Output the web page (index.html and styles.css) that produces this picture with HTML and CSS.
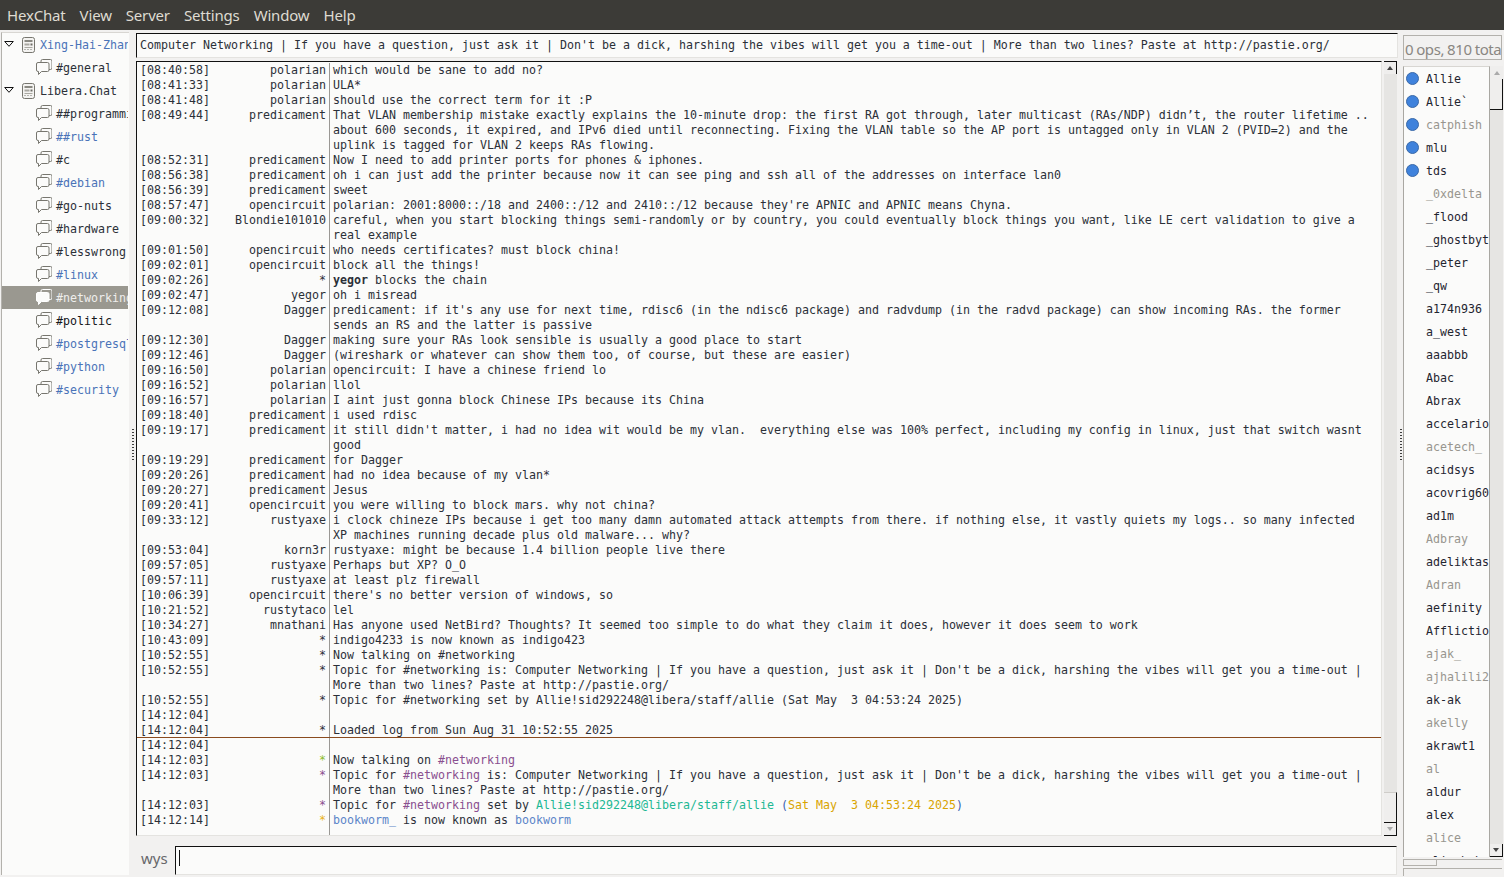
FILE: index.html
```html
<!DOCTYPE html>
<html lang="en">
<head>
<meta charset="utf-8">
<title>HexChat</title>
<link rel="stylesheet" href="styles.css">
</head>
<body>
<svg class="defs" width="0" height="0">
  <symbol id="srv" viewBox="0 0 15 16">
    <rect x="1.5" y="0.5" width="12" height="15" rx="2" fill="#f4f3f1" stroke="#77766f"/>
    <rect x="3.5" y="3" width="8" height="2" fill="#8a8982"/>
    <rect x="3.5" y="6.5" width="5" height="2" fill="#a9a8a1"/>
    <rect x="9.5" y="6.5" width="2" height="2" fill="#6d6c66"/>
    <rect x="3.5" y="10" width="8" height="1" fill="#a9a8a1"/>
    <rect x="3.5" y="12" width="1" height="1" fill="#77766f"/>
    <rect x="6.500" y="12" width="1" height="1" fill="#77766f"/>
    <rect x="9.500" y="12" width="1" height="1" fill="#77766f"/>
  </symbol>
  <symbol id="chat" viewBox="0 0 16 16">
    <path d="M5 3V2a1.500 1.500 0 0 1 1.500-1.500h8A1.500 1.500 0 0 1 16 2v7a1.500 1.500 0 0 1-1.500 1.500H13" fill="none" stroke="currentColor"/>
    <path d="M2 3.500h9.500A1.500 1.500 0 0 1 13 5v6a1.500 1.500 0 0 1-1.500 1.500H5.500L2.500 15.500v-3H2A1.500 1.500 0 0 1 .5 11V5A1.500 1.500 0 0 1 2 3.500z" fill="#fbfbfa" stroke="currentColor"/>
  </symbol>
  <symbol id="exp" viewBox="0 0 10 6">
    <path d="M.7.5h8.600L5 5.300z" fill="#fbfbfa" stroke="#111" stroke-width="1"/>
  </symbol>
</svg>

<nav class="menubar">
  <span class="menu">HexChat</span>
  <span class="menu">View</span>
  <span class="menu">Server</span>
  <span class="menu">Settings</span>
  <span class="menu">Window</span>
  <span class="menu">Help</span>
</nav>

<div class="app">
  <aside class="tree">
    <div class="node net"><svg class="exp"><use href="#exp"/></svg><svg class="srv"><use href="#srv"/></svg><span class="blue">Xing-Hai-Zhang</span></div>
    <div class="node ch"><svg class="cic"><use href="#chat"/></svg><span>#general</span></div>
    <div class="node net"><svg class="exp"><use href="#exp"/></svg><svg class="srv"><use href="#srv"/></svg><span>Libera.Chat</span></div>
    <div class="node ch"><svg class="cic"><use href="#chat"/></svg><span>##programming</span></div>
    <div class="node ch"><svg class="cic"><use href="#chat"/></svg><span class="blue">##rust</span></div>
    <div class="node ch"><svg class="cic"><use href="#chat"/></svg><span>#c</span></div>
    <div class="node ch"><svg class="cic"><use href="#chat"/></svg><span class="blue">#debian</span></div>
    <div class="node ch"><svg class="cic"><use href="#chat"/></svg><span>#go-nuts</span></div>
    <div class="node ch"><svg class="cic"><use href="#chat"/></svg><span>#hardware</span></div>
    <div class="node ch"><svg class="cic"><use href="#chat"/></svg><span>#lesswrong</span></div>
    <div class="node ch"><svg class="cic"><use href="#chat"/></svg><span class="blue">#linux</span></div>
    <div class="node ch sel"><svg class="cic"><use href="#chat"/></svg><span>#networking</span></div>
    <div class="node ch"><svg class="cic"><use href="#chat"/></svg><span class="black">#politic</span></div>
    <div class="node ch"><svg class="cic"><use href="#chat"/></svg><span class="blue">#postgresql</span></div>
    <div class="node ch"><svg class="cic"><use href="#chat"/></svg><span class="blue">#python</span></div>
    <div class="node ch"><svg class="cic"><use href="#chat"/></svg><span class="blue">#security</span></div>
  </aside>

  <div class="grip grip-l"><i class="dots"></i></div>

  <main class="center">
    <div class="topic">Computer Networking | If you have a question, just ask it | Don't be a dick, harshing the vibes will get you a time-out | More than two lines? Paste at http://pastie.org/</div>
    <div class="chat">
      <div class="log">
        <div class="row"><span class="t">[08:40:58]</span><span class="n">polarian</span><span class="m">which would be sane to add no?</span></div>
        <div class="row"><span class="t">[08:41:33]</span><span class="n">polarian</span><span class="m">ULA*</span></div>
        <div class="row"><span class="t">[08:41:48]</span><span class="n">polarian</span><span class="m">should use the correct term for it :P</span></div>
        <div class="row"><span class="t">[08:49:44]</span><span class="n">predicament</span><span class="m">That VLAN membership mistake exactly explains the 10-minute drop: the first RA got through, later multicast (RAs/NDP) didn’t, the router lifetime ..
about 600 seconds, it expired, and IPv6 died until reconnecting. Fixing the VLAN table so the AP port is untagged only in VLAN 2 (PVID=2) and the
uplink is tagged for VLAN 2 keeps RAs flowing.</span></div>
        <div class="row"><span class="t">[08:52:31]</span><span class="n">predicament</span><span class="m">Now I need to add printer ports for phones &amp; iphones.</span></div>
        <div class="row"><span class="t">[08:56:38]</span><span class="n">predicament</span><span class="m">oh i can just add the printer because now it can see ping and ssh all of the addresses on interface lan0</span></div>
        <div class="row"><span class="t">[08:56:39]</span><span class="n">predicament</span><span class="m">sweet</span></div>
        <div class="row"><span class="t">[08:57:47]</span><span class="n">opencircuit</span><span class="m">polarian: 2001:8000::/18 and 2400::/12 and 2410::/12 because they're APNIC and APNIC means Chyna.</span></div>
        <div class="row"><span class="t">[09:00:32]</span><span class="n">Blondie101010</span><span class="m">careful, when you start blocking things semi-randomly or by country, you could eventually block things you want, like LE cert validation to give a
real example</span></div>
        <div class="row"><span class="t">[09:01:50]</span><span class="n">opencircuit</span><span class="m">who needs certificates? must block china!</span></div>
        <div class="row"><span class="t">[09:02:01]</span><span class="n">opencircuit</span><span class="m">block all the things!</span></div>
        <div class="row"><span class="t">[09:02:26]</span><span class="n">*</span><span class="m"><b>yegor</b> blocks the chain</span></div>
        <div class="row"><span class="t">[09:02:47]</span><span class="n">yegor</span><span class="m">oh i misread</span></div>
        <div class="row"><span class="t">[09:12:08]</span><span class="n">Dagger</span><span class="m">predicament: if it's any use for next time, rdisc6 (in the ndisc6 package) and radvdump (in the radvd package) can show incoming RAs. the former
sends an RS and the latter is passive</span></div>
        <div class="row"><span class="t">[09:12:30]</span><span class="n">Dagger</span><span class="m">making sure your RAs look sensible is usually a good place to start</span></div>
        <div class="row"><span class="t">[09:12:46]</span><span class="n">Dagger</span><span class="m">(wireshark or whatever can show them too, of course, but these are easier)</span></div>
        <div class="row"><span class="t">[09:16:50]</span><span class="n">polarian</span><span class="m">opencircuit: I have a chinese friend lo</span></div>
        <div class="row"><span class="t">[09:16:52]</span><span class="n">polarian</span><span class="m">llol</span></div>
        <div class="row"><span class="t">[09:16:57]</span><span class="n">polarian</span><span class="m">I aint just gonna block Chinese IPs because its China</span></div>
        <div class="row"><span class="t">[09:18:40]</span><span class="n">predicament</span><span class="m">i used rdisc</span></div>
        <div class="row"><span class="t">[09:19:17]</span><span class="n">predicament</span><span class="m">it still didn't matter, i had no idea wit would be my vlan.  everything else was 100% perfect, including my config in linux, just that switch wasnt
good</span></div>
        <div class="row"><span class="t">[09:19:29]</span><span class="n">predicament</span><span class="m">for Dagger</span></div>
        <div class="row"><span class="t">[09:20:26]</span><span class="n">predicament</span><span class="m">had no idea because of my vlan*</span></div>
        <div class="row"><span class="t">[09:20:27]</span><span class="n">predicament</span><span class="m">Jesus</span></div>
        <div class="row"><span class="t">[09:20:41]</span><span class="n">opencircuit</span><span class="m">you were willing to block mars. why not china?</span></div>
        <div class="row"><span class="t">[09:33:12]</span><span class="n">rustyaxe</span><span class="m">i clock chineze IPs because i get too many damn automated attack attempts from there. if nothing else, it vastly quiets my logs.. so many infected
XP machines running decade plus old malware... why?</span></div>
        <div class="row"><span class="t">[09:53:04]</span><span class="n">korn3r</span><span class="m">rustyaxe: might be because 1.4 billion people live there</span></div>
        <div class="row"><span class="t">[09:57:05]</span><span class="n">rustyaxe</span><span class="m">Perhaps but XP? O_O</span></div>
        <div class="row"><span class="t">[09:57:11]</span><span class="n">rustyaxe</span><span class="m">at least plz firewall</span></div>
        <div class="row"><span class="t">[10:06:39]</span><span class="n">opencircuit</span><span class="m">there's no better version of windows, so</span></div>
        <div class="row"><span class="t">[10:21:52]</span><span class="n">rustytaco</span><span class="m">lel</span></div>
        <div class="row"><span class="t">[10:34:27]</span><span class="n">mnathani</span><span class="m">Has anyone used NetBird? Thoughts? It seemed too simple to do what they claim it does, however it does seem to work</span></div>
        <div class="row"><span class="t">[10:43:09]</span><span class="n">*</span><span class="m">indigo4233 is now known as indigo423</span></div>
        <div class="row"><span class="t">[10:52:55]</span><span class="n">*</span><span class="m">Now talking on #networking</span></div>
        <div class="row"><span class="t">[10:52:55]</span><span class="n">*</span><span class="m">Topic for #networking is: Computer Networking | If you have a question, just ask it | Don't be a dick, harshing the vibes will get you a time-out |
More than two lines? Paste at http://pastie.org/</span></div>
        <div class="row"><span class="t">[10:52:55]</span><span class="n">*</span><span class="m">Topic for #networking set by Allie!sid292248@libera/staff/allie (Sat May  3 04:53:24 2025)</span></div>
        <div class="row"><span class="t">[14:12:04]</span><span class="n"></span><span class="m"></span></div>
        <div class="row marker"><span class="t">[14:12:04]</span><span class="n">*</span><span class="m">Loaded log from Sun Aug 31 10:52:55 2025</span></div>
        <div class="row"><span class="t">[14:12:04]</span><span class="n"></span><span class="m"></span></div>
        <div class="row"><span class="t">[14:12:03]</span><span class="n c-green">*</span><span class="m">Now talking on <span class="c-purple">#networking</span></span></div>
        <div class="row"><span class="t">[14:12:03]</span><span class="n c-purple">*</span><span class="m">Topic for <span class="c-purple">#networking</span> is: Computer Networking | If you have a question, just ask it | Don't be a dick, harshing the vibes will get you a time-out |
More than two lines? Paste at http://pastie.org/</span></div>
        <div class="row"><span class="t">[14:12:03]</span><span class="n c-purple">*</span><span class="m">Topic for <span class="c-purple">#networking</span> set by <span class="c-teal">Allie!sid292248@libera/staff/allie</span> <span class="c-blue">(</span><span class="c-gold">Sat May  3 04:53:24 2025</span><span class="c-blue">)</span></span></div>
        <div class="row"><span class="t">[14:12:14]</span><span class="n c-gold">*</span><span class="m"><span class="c-sky">bookworm_</span> is now known as <span class="c-sky">bookworm</span></span></div>
        <div class="row fill"><span class="t"></span><span class="n"></span><span class="m"></span></div>
      </div>
      <div class="vbar">
        <div class="btn btn-top"><i class="up"></i></div>
        <div class="trough"><div class="thumb thumb-end"></div></div>
        <div class="btn btn-end"><i class="down off"></i></div>
      </div>
    </div>
    <div class="inputrow">
      <span class="nickbtn">wys</span>
      <div class="entry"><i class="caret"></i></div>
    </div>
  </main>

  <div class="grip grip-r"><i class="dots"></i></div>

  <aside class="side">
    <div class="count">0 ops, 810 total</div>
    <div class="ulist">
      <div class="users">
        <div class="u"><i class="dot"></i>Allie</div>
        <div class="u"><i class="dot"></i>Allie`</div>
        <div class="u away"><i class="dot"></i>catphish</div>
        <div class="u"><i class="dot"></i>mlu</div>
        <div class="u"><i class="dot"></i>tds</div>
        <div class="u away">_0xdelta</div>
        <div class="u">_flood</div>
        <div class="u">_ghostbyte</div>
        <div class="u">_peter</div>
        <div class="u">_qw</div>
        <div class="u">a174n936</div>
        <div class="u">a_west</div>
        <div class="u">aaabbb</div>
        <div class="u">Abac</div>
        <div class="u">Abrax</div>
        <div class="u">accelario</div>
        <div class="u away">acetech_</div>
        <div class="u">acidsys</div>
        <div class="u">acovrig60</div>
        <div class="u">ad1m</div>
        <div class="u away">Adbray</div>
        <div class="u">adeliktas</div>
        <div class="u away">Adran</div>
        <div class="u">aefinity</div>
        <div class="u">Afflictio</div>
        <div class="u away">ajak_</div>
        <div class="u away">ajhalili2</div>
        <div class="u">ak-ak</div>
        <div class="u away">akelly</div>
        <div class="u">akrawt1</div>
        <div class="u away">al</div>
        <div class="u">aldur</div>
        <div class="u">alex</div>
        <div class="u away">alice</div>
        <div class="u">alicebob</div>
      </div>
      <div class="vbar">
        <div class="btn btn-top-plain"><i class="up off"></i></div>
        <div class="trough"><div class="thumb thumb-start"></div></div>
        <div class="btn btn-end"><i class="down"></i></div>
      </div>
    </div>
    <div class="hbar"><div class="hthumb"></div></div>
    <div class="status"></div>
  </aside>
</div>
</body>
</html>
```
FILE: styles.css
```css
* { box-sizing: border-box; }
html, body { margin: 0; height: 877px; overflow: hidden; }
body {
  background: #f2f1f0;
  color: #2b3038;
  font-family: "DejaVu Sans Mono", monospace;
  font-size: 11.642px;
  line-height: 15px;
}
.defs { position: absolute; }

.menubar {
  display: flex;
  height: 30px;
  align-items: center;
  background: #3c3b37;
  color: #dfdbd2;
  font-family: "Noto Sans", sans-serif;
  font-size: 15px;
  letter-spacing: -0.17px;
}
.menu { padding: 0 7px; margin-top: 1px; }

.app { display: flex; height: 847px; padding-top: 2px; }

/* channel tree */
.tree {
  width: 128px;
  margin-left: 1px;
  margin-bottom: 2px;
  padding-right: 1px;
  border-left: 1px solid #b3b1ac;
  border-top: 1px solid #d8d6d2;
  background: #fbfbfa;
  overflow: hidden;
}
.node {
  display: flex;
  align-items: center;
  height: 23px;
  white-space: nowrap;
  overflow: hidden;
}
.node.net { padding-left: 2px; }
.node.ch { padding-left: 34px; }
.node span { display: block; padding-top: 1px; }
.exp { width: 10px; height: 6px; margin-right: 7px; flex: none; position: relative; top: -1px; }
.srv { width: 15px; height: 16px; margin-right: 4px; flex: none; }
.cic { width: 16px; height: 16px; margin-right: 4px; flex: none; position: relative; top: -1px; color: #77766f; }
.blue { color: #4a73b8; }
.black { color: #14161a; }
.sel { background: #9a9890; color: #efeeec; }
.sel .cic { color: #fff; }

/* paned grips */
.grip { display: flex; align-items: center; flex: none; }
.grip-l { width: 7px; padding-left: 3px; }
.grip-r { width: 5px; padding-left: 2px; }
.dots {
  display: block;
  width: 2px;
  height: 32px;
  margin-top: -19px;
  background: repeating-linear-gradient(#111 0 1px, transparent 1px 3px);
  opacity: .8;
}

/* centre column */
.center { width: 1262px; flex: none; display: flex; flex-direction: column; }
.topic {
  height: 25px;
  margin-top: 1px;
  padding: 4px 4px 0 3px;
  border-top: 1px solid #111;
  border-left: 1px solid #111;
  border-right: 1px solid #e4e3e0;
  border-bottom: 1px solid #e4e3e0;
  background: #fbfbfa;
  white-space: nowrap;
  overflow: hidden;
}
.chat {
  display: flex;
  height: 775px;
  margin-top: 3px;
  margin-right: 1px;
}
.log {
  flex: 1;
  min-width: 0;
  display: flex;
  flex-direction: column;
  padding-top: 1px;
  padding-left: 3px;
  margin-right: 2px;
  background: #fbfbfa;
  border-top: 1px solid #111;
  border-left: 1px solid #111;
  border-right: 1px solid #e4e3e0;
  border-bottom: 1px solid #e4e3e0;
}
.row { display: flex; flex: none; }
.row.fill { flex: 1; }
.row.marker { border-bottom: 1px solid #8a4b1f; margin-left: -3px; padding-left: 3px; height: 15px; }
.marker .m, .marker .t, .marker .n { line-height: 15px; height: 14px; }
.t { width: 70px; flex: none; }
.n { width: 116px; flex: none; text-align: right; }
.m {
  flex: 1;
  margin-left: 3px;
  padding-left: 3px;
  border-left: 1px solid #9a9894;
  white-space: pre;
}
.m b { font-weight: bold; }
.c-green { color: #8dbb2e; }
.c-purple { color: #8a4f8f; }
.c-teal { color: #1db894; }
.c-blue { color: #3a5fb0; }
.c-gold { color: #d9a400; }
.c-sky { color: #5b85c9; }
.n.c-gold { color: #e8b21c; }

/* scrollbars */
.vbar { display: flex; flex-direction: column; flex: none; width: 13px; background: #e6e5e3; }
.btn {
  height: 12px;
  flex: none;
  display: flex;
  align-items: center;
  justify-content: center;
  background: #efeeed;
}
.btn-top { height: 13px; border-top: 1px solid #111; border-right: 1px solid #111; }
.btn-top-plain { height: 13px; }
.btn-end { height: 13px; border-right: 1px solid #111; border-bottom: 1px solid #111; }
.trough { flex: 1; display: flex; flex-direction: column; }
.thumb { height: 31px; background: #efeeed; flex: none; border-right: 1px solid #111; border-bottom: 1px solid #111; }
.thumb-end { margin-top: auto; border-top: 1px solid #cfcdc9; }
.up, .down { display: block; width: 0; height: 0; border-left: 3px solid transparent; border-right: 3px solid transparent; }
.up { border-bottom: 4px solid #444; }
.down { border-top: 4px solid #444; }
.up.off { border-bottom-color: #aaa; }
.down.off { border-top-color: #aaa; }

/* input */
.inputrow { display: flex; align-items: stretch; margin-top: 10px; height: 29px; }
.nickbtn {
  width: 39px;
  padding: 1px 0 0 5px;
  color: #67676a;
  font-family: "Noto Sans", sans-serif;
  font-size: 15px;
  line-height: 22px;
}
.entry {
  flex: 1;
  margin-right: 1px;
  padding: 3px 0 0 3px;
  background: #fbfbfa;
  border-top: 1px solid #111;
  border-left: 1px solid #111;
  border-right: 1px solid #e4e3e0;
  border-bottom: 1px solid #e4e3e0;
}
.caret { display: block; width: 1px; height: 16px; background: #111; }

/* right column */
.side { width: 101px; flex: none; display: flex; flex-direction: column; }
.count {
  height: 25px;
  margin-top: 3px;
  margin-right: 2px;
  padding: 3px 0 0 1px;
  border: 1px solid #b3b1ac;
  color: #8a8782;
  font-family: "Noto Sans", sans-serif;
  font-size: 15px;
  letter-spacing: -0.4px;
  word-spacing: -0.5px;
  line-height: 20px;
  white-space: nowrap;
  overflow: hidden;
}
.ulist { display: flex; height: 791px; margin-top: 6px; }
.users {
  width: 87px;
  flex: none;
  padding-top: 1px;
  background: #fbfbfa;
  border-left: 1px solid #a9a7a2;
  border-right: 1px solid #a9a7a2;
  border-top: 1px solid #d8d6d2;
  overflow: hidden;
}
.u {
  position: relative;
  height: 23px;
  line-height: 23px;
  padding-left: 22px;
  color: #1f2530;
  white-space: nowrap;
  overflow: hidden;
}
.u.away { color: #98968f; }
.dot {
  position: absolute;
  left: 2px;
  top: 4px;
  width: 13px;
  height: 13px;
  border-radius: 50%;
  background: #3f82dc;
  border: 1px solid #3a69a8;
}
.hbar { height: 7px; margin-top: 2px; margin-right: 2px; border-left: 1px solid #b3b1ac; border-top: 1px solid #b3b1ac; }
.hthumb { width: 33px; height: 6px; border-right: 1px solid #b3b1ac; border-bottom: 1px solid #b3b1ac; }
.status { height: 8px; margin-top: 2px; margin-right: 2px; border-left: 1px solid #b3b1ac; border-top: 1px solid #b3b1ac; }
```
